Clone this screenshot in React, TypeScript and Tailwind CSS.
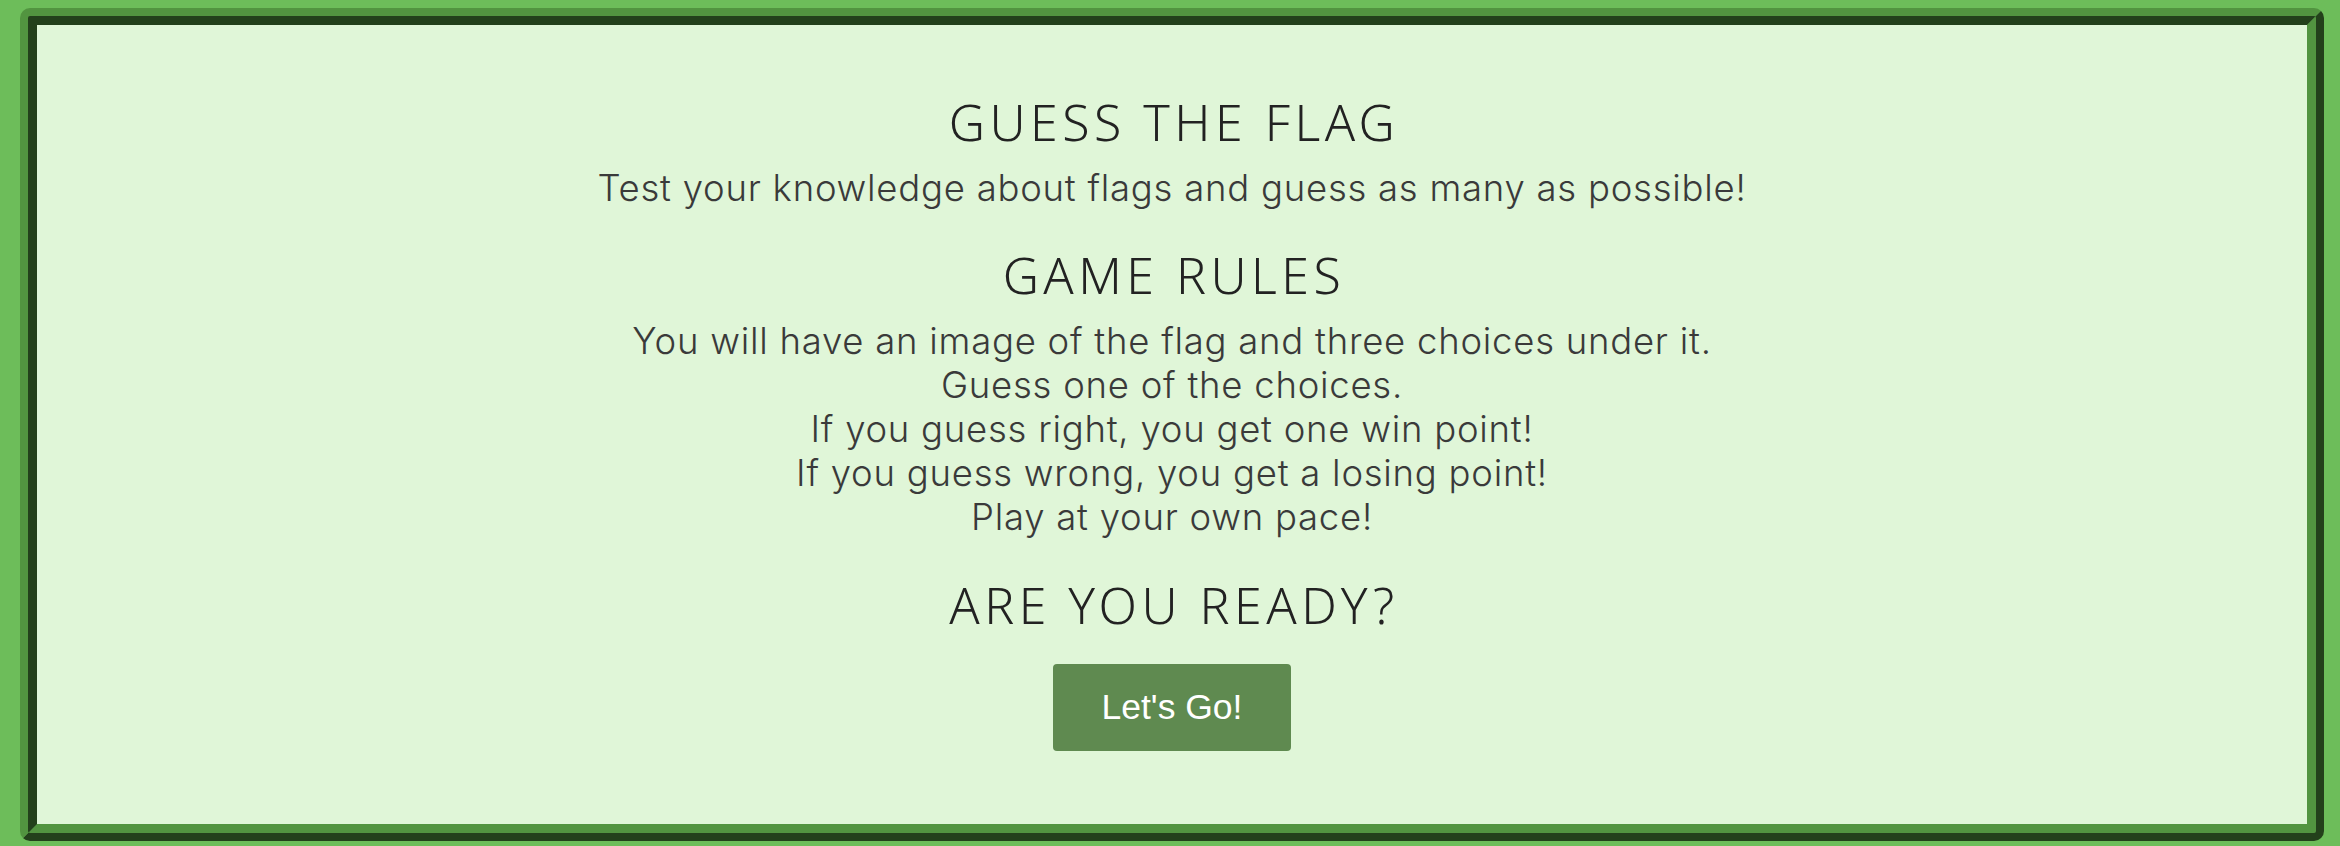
import React from "react";

export default function App() {
  const rules = [
    "You will have an image of the flag and three choices under it.",
    "Guess one of the choices.",
    "If you guess right, you get one win point!",
    "If you guess wrong, you get a losing point!",
    "Play at your own pace!",
  ];
  const heading =
    "font-['Noto_Sans',sans-serif] text-[50px] leading-[60px] font-[350] tracking-[4.5px] text-[#222222] whitespace-nowrap";
  const body =
    "font-['Inter',sans-serif] text-[36.5px] leading-[44px] font-light tracking-[0.75px] text-[#3a3a3a] text-center whitespace-nowrap";
  return (
    <div className="w-[2340px] h-[846px] bg-[#6dbd5a] pt-[8px] pl-[20px] pr-[16px]">
      <div className="h-[833px] border-[17px] [border-style:ridge] border-[#529440] rounded-[10px] bg-[#e0f6d8] flex flex-col items-center">
        <h1 className={`${heading} mt-[67px] pl-[4px]`}>GUESS THE FLAG</h1>
        <p className={`${body} mt-[14px]`}>
          Test your knowledge about flags and guess as many as possible!
        </p>
        <h2 className={`${heading} mt-[35px] pl-[4px]`}>GAME RULES</h2>
        <div className={`${body} mt-[14px] flex flex-col items-center`}>
          {rules.map((r) => (
            <span key={r}>{r}</span>
          ))}
        </div>
        <h2 className={`${heading} mt-[36px] pl-[4px]`}>ARE YOU READY?</h2>
        <button className="mt-[29px] w-[238px] h-[87px] rounded-[4px] bg-[#5f8a50] text-white font-['Liberation_Sans',Arial,sans-serif] text-[35.5px] leading-none">
          Let's Go!
        </button>
      </div>
    </div>
  );
}
